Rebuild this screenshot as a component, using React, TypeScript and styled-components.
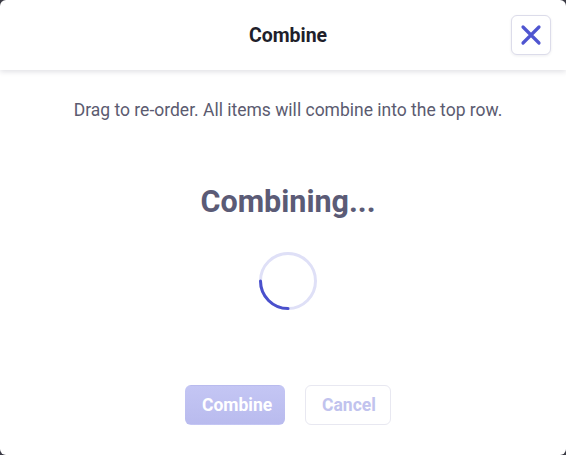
import React from 'react';
import styled, { createGlobalStyle } from 'styled-components';

const GlobalStyle = createGlobalStyle`
  html, body {
    margin: 0;
    padding: 0;
    background: #3a3a44;
  }
  body {
    font-family: Roboto, 'Liberation Sans', sans-serif;
  }
`;

export default function App() {
  return (
    <>
      <GlobalStyle />
      <ModalWrapper>
        <Header>
          <Title>Combine</Title>
          <CloseButton type='button' aria-label='Close'>
            <svg width='22' height='22' viewBox='0 0 22 22'>
              <path d='M3 3 L19 19 M19 3 L3 19' stroke='#4f55d0' strokeWidth='3.2' strokeLinecap='round' />
            </svg>
          </CloseButton>
        </Header>
        <Body>
          <Hint>Drag to re-order. All items will combine into the top row.</Hint>
          <Status>Combining...</Status>
          <Spinner width='58' height='58' viewBox='0 0 58 58'>
            <circle cx='29' cy='29' r='27.5' fill='none' stroke='#dfe0f7' strokeWidth='3' />
            <path d='M1.5 29 A27.5 27.5 0 0 0 29 56.5' fill='none' stroke='#4a50cc' strokeWidth='3' strokeLinecap='round' />
          </Spinner>
        </Body>
        <Footer>
          <ActionButton type='button' $primary disabled>
            Combine
          </ActionButton>
          <ActionButton type='button' disabled>
            Cancel
          </ActionButton>
        </Footer>
      </ModalWrapper>
    </>
  );
}

const ModalWrapper = styled.div`
  display: flex;
  flex-direction: column;
  width: 566px;
  height: 455px;
  background: #ffffff;
  border-radius: 6px;
  overflow: hidden;
`;

const Header = styled.div`
  position: relative;
  display: flex;
  align-items: center;
  justify-content: center;
  height: 70px;
  padding-left: 10px;
  flex-shrink: 0;
  box-shadow: 0 2px 5px rgba(30, 30, 60, 0.13);
`;

const Title = styled.h2`
  margin: 0;
  font-size: 19.5px;
  font-weight: 700;
  color: #1f1f2b;
`;

const CloseButton = styled.button`
  position: absolute;
  right: 15px;
  top: 15px;
  display: flex;
  align-items: center;
  justify-content: center;
  width: 40px;
  height: 40px;
  padding: 0;
  background: #ffffff;
  border: 1px solid #dcdcea;
  border-radius: 6px;
  box-shadow: 0 1px 3px rgba(30, 30, 60, 0.08);
  cursor: pointer;
`;

const Body = styled.div`
  display: flex;
  flex-direction: column;
  align-items: center;
  flex: 1;
  padding: 29px 0 0 10px;
`;

const Hint = styled.p`
  margin: 0;
  font-size: 17.5px;
  line-height: 22px;
  color: #5b5b70;
`;

const Status = styled.h1`
  margin: 63px 0 0;
  font-size: 30.5px;
  line-height: 36px;
  font-weight: 700;
  color: #5b5b76;
`;

const Spinner = styled.svg`
  margin-top: 32px;
  display: block;
`;

const Footer = styled.div`
  display: flex;
  justify-content: center;
  gap: 20px;
  padding: 0 0 30px 10px;
`;

const ActionButton = styled.button<{ $primary?: boolean }>`
  height: 40px;
  padding: 0 16px;
  font-family: Roboto, 'Liberation Sans', sans-serif;
  font-size: 17.5px;
  font-weight: 700;
  border-radius: 6px;
  color: ${({ $primary }) => ($primary ? '#ffffff' : '#c1c3ee')};
  background: ${({ $primary }) => ($primary ? 'linear-gradient(#c4c6f4, #b9bbee)' : '#ffffff')};
  border: 1px solid ${({ $primary }) => ($primary ? 'transparent' : '#e8e8f1')};
  width: ${({ $primary }) => ($primary ? '100px' : '86px')};
`;
